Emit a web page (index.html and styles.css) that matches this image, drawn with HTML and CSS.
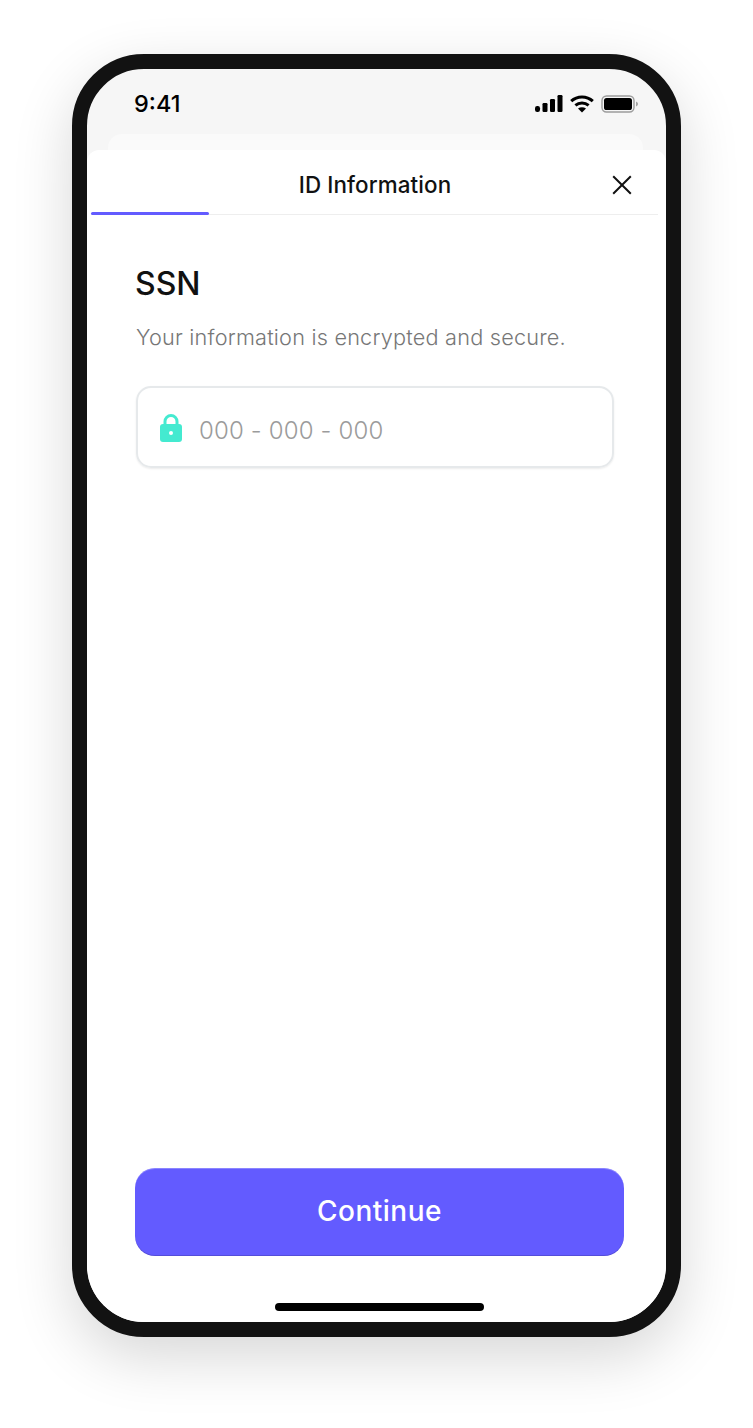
FILE: index.html
```html
<!DOCTYPE html>
<html lang="en">
<head>
    <meta charset="UTF-8">
    <meta name="viewport" content="width=device-width, initial-scale=1.0">
    <title>ID Information</title>
    <link rel="stylesheet" href="styles.css">
</head>
<body>
    <div class="phone">
        <div class="status-bar">
            <span class="time">9:41</span>
            <div class="status-icons">
                <svg class="signal" width="28" height="17" viewBox="0 0 28 17" fill="#000">
                    <rect x="0" y="11" width="5" height="6" rx="2.2"/>
                    <rect x="7.5" y="8" width="5" height="9" rx="1.2"/>
                    <rect x="15" y="4" width="5" height="13" rx="1.2"/>
                    <rect x="22.5" y="0" width="5" height="17" rx="1.2"/>
                </svg>
                <svg class="wifi" width="24" height="18" viewBox="0 0 24 18" fill="none" stroke="#000" stroke-width="3">
                    <path d="M1.2 6.2C7.2.6 16.8.6 22.8 6.2"/>
                    <path d="M5.4 10.4c3.800-3.300 9.400-3.300 13.200 0"/>
                    <path d="M12 17.6 8 13.600c2.400-1.700 5.600-1.700 8 0z" fill="#000" stroke="none"/>
                </svg>
                <svg class="battery" width="37" height="18" viewBox="0 0 37 18" fill="none">
                    <rect x="1" y="1" width="32" height="16" rx="4.5" stroke="#9c9c9c" stroke-width="1.4"/>
                    <rect x="3" y="3" width="28" height="12" rx="2.6" fill="#000"/>
                    <path d="M35 6.500c1.200.4 2 1.400 2 2.500s-.8 2.100-2 2.500z" fill="#a5a5a5"/>
                </svg>
            </div>
        </div>
        <div class="back-card"></div>
        <div class="sheet">
            <div class="sheet-header">
                <h2>ID Information</h2>
                <svg class="close" width="20" height="20" viewBox="0 0 20 20" stroke="#111" stroke-width="2" fill="none">
                    <path d="M1.200 1.200 18.800 18.800M18.800 1.200 1.200 18.800"/>
                </svg>
            </div>
            <div class="progress"><div class="progress-fill"></div></div>
            <div class="content">
                <h1>SSN</h1>
                <p class="sub">Your information is encrypted and secure.</p>
                <div class="field">
                    <svg class="lock" width="22" height="28" viewBox="0 0 22 28">
                        <path d="M5 12V7.500a6 6 0 0 1 12 0V12" fill="none" stroke="#44ead0" stroke-width="3"/>
                        <rect x="0" y="10" width="22" height="18" rx="3" fill="#44ead0"/>
                        <circle cx="11" cy="19" r="2" fill="#fff"/>
                    </svg>
                    <span class="placeholder">000 - 000 - 000</span>
                </div>
            </div>
            <button class="btn">Continue</button>
            <div class="home-bar"></div>
        </div>
    </div>
</body>
</html>
```

FILE: styles.css
```css
* {
    margin: 0;
    padding: 0;
    box-sizing: border-box;
}

body {
    font-family: Inter, 'Liberation Sans', sans-serif;
    background: #fff;
    width: 753px;
    height: 1428px;
    overflow: hidden;
    padding: 54px 0 0 72px;
    color: #111;
}

.phone {
    width: 609px;
    height: 1283px;
    border: 15px solid #121212;
    border-radius: 72px;
    background: #f6f6f6;
    box-shadow: 0 20px 60px rgba(0,0,0,0.16);
    display: flex;
    flex-direction: column;
    overflow: hidden;
}

.status-bar {
    height: 65px;
    flex: none;
    display: flex;
    justify-content: space-between;
    padding: 21px 28px 0 47px;
}

.time {
    font-size: 23.500px;
    font-weight: 500;
    line-height: 28px;
    color: #000;
}

.status-icons {
    display: flex;
    align-items: flex-start;
    gap: 7px;
    padding-top: 5px;
}

.back-card {
    height: 16px;
    flex: none;
    margin: 0 23px 0 21px;
    background: #fafafa;
    border-radius: 14px 14px 0 0;
}

.sheet {
    flex: 1;
    background: #fff;
    border-radius: 12px 12px 0 0;
    display: flex;
    flex-direction: column;
}

.sheet-header {
    height: 64px;
    flex: none;
    position: relative;
    display: flex;
    align-items: center;
    justify-content: center;
    padding-right: 3px;
}

.sheet-header h2 {
    font-size: 22.400px;
    font-weight: 450;
    line-height: 70px;
    padding-top: 6px;
    letter-spacing: 0.1px;
}

.close {
    position: absolute;
    right: 34px;
    top: 25px;
}

.progress {
    height: 1px;
    flex: none;
    margin: 0 8px 0 4px;
    background: #eeeeee;
    position: relative;
}

.progress-fill {
    position: absolute;
    left: 0;
    top: -2px;
    width: 118px;
    height: 3px;
    background: #635bff;
    border-radius: 2px;
}

.content {
    flex: 1;
    padding: 50px 52px 0 49px;
}

.content h1 {
    font-size: 32px;
    font-weight: 500;
    line-height: 38px;
    margin-left: -1px;
}

.sub {
    font-size: 21.700px;
    font-weight: 350;
    line-height: 30px;
    letter-spacing: 0.2px;
    color: #777;
    margin-top: 19px;
}

.field {
    height: 82px;
    margin-top: 34px;
    border: 2px solid #e6e9eb;
    border-radius: 15px;
    box-shadow: 0 1px 2px rgba(0,0,0,0.08);
    display: flex;
    align-items: center;
    padding-left: 22px;
    gap: 17px;
}

.lock {
    flex: none;
    margin-top: 1px;
}

.placeholder {
    font-size: 24px;
    font-weight: 350;
    letter-spacing: 0.15px;
    color: #9b9b9b;
    margin-top: 6px;
}

.btn {
    display: block;
    flex: none;
    width: 489px;
    height: 88px;
    margin-left: 48px;
    border: none;
    border-radius: 20px;
    background: #635bff;
    box-shadow: inset 0 1px 0 rgba(255,255,255,0.25), inset 0 -1px 0 rgba(0,0,0,0.15);
    color: #fff;
    font-family: inherit;
    font-size: 28px;
    font-weight: 450;
    letter-spacing: 0.5px;
    padding-bottom: 2px;
}

.home-bar {
    flex: none;
    width: 209px;
    height: 8px;
    margin: 47px 0 11px 188px;
    background: #000;
    border-radius: 4px;
}
```
